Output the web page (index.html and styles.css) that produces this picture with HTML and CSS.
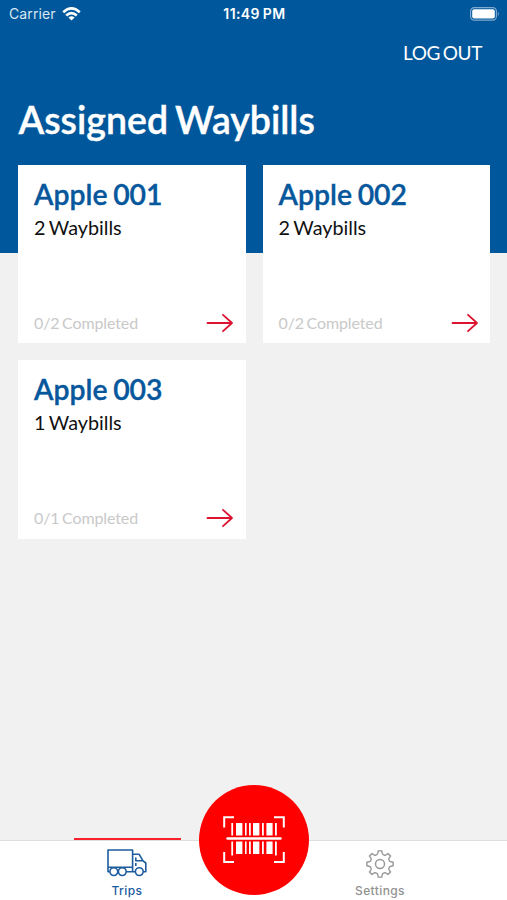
FILE: index.html
```
<!DOCTYPE html>
<html lang="en">
<head>
<meta charset="utf-8">
<title>Assigned Waybills</title>
<link rel="stylesheet" href="styles.css">
</head>
<body>
<svg class="defs" width="0" height="0" aria-hidden="true">
  <symbol id="arrow" viewBox="0 0 28 20"><path d="M1.5 10H26M17 1.8L26 10L17 18.2" fill="none" stroke="#dc1431" stroke-width="1.8" stroke-linecap="round" stroke-linejoin="round"/></symbol>
</svg>
<div class="app">
  <header class="header">
    <div class="status">
      <div class="carrier"><span>Carrier</span>
        <svg class="wifi" viewBox="0 0 19 14" width="19" height="14"><g fill="none" stroke="#fff" stroke-width="2.6"><path d="M1.2 5.3Q9.5-2.4 17.8 5.3"/><path d="M4.2 8.5Q9.5 3.6 14.8 8.5"/></g><path d="M6.4 10.5Q9.5 7.8 12.6 10.5L9.5 13.6Z" fill="#fff"/></svg>
      </div>
      <span class="time">11:49 PM</span>
      <svg class="battery" viewBox="0 0 30 14" width="30" height="14"><rect x=".6" y=".6" width="25.8" height="12.6" rx="3.6" fill="none" stroke="#7fa9cf" stroke-width="1.2"/><rect x="2.2" y="2.2" width="22.6" height="9.4" rx="2" fill="#fff"/><path d="M27.8 4.6Q29.8 6.9 27.8 9.2Z" fill="#7fa9cf"/></svg>
    </div>
    <a class="logout">LOG OUT</a>
    <h1>Assigned Waybills</h1>
  </header>
  <main class="grid">
    <article class="card"><h2>Apple 001</h2><p>2 Waybills</p><footer><span>0/2 Completed</span><svg width="28" height="20"><use href="#arrow"/></svg></footer></article>
    <article class="card"><h2>Apple 002</h2><p>2 Waybills</p><footer><span>0/2 Completed</span><svg width="28" height="20"><use href="#arrow"/></svg></footer></article>
    <article class="card"><h2>Apple 003</h2><p>1 Waybills</p><footer><span>0/1 Completed</span><svg width="28" height="20"><use href="#arrow"/></svg></footer></article>
  </main>
  <nav class="tabs">
    <a class="tab active">
      <svg width="40" height="28" viewBox="0 0 40 28" fill="none" stroke="#1c5c9f" stroke-width="1.6" stroke-linejoin="round"><path d="M2.8 22.7H1V1H25.6V22.7H19.2M10.6 22.7H11.4M25.6 5.3H32.2L36 11.8L38.8 14V22.7H36.4M28.2 22.7H25.6M1 18.3H25.6M36 11.8H28.8V8.6M28.8 14V17"/><circle cx="6.8" cy="22.6" r="3.9"/><circle cx="15.3" cy="22.6" r="3.9"/><circle cx="32.3" cy="22.6" r="3.9"/></svg>
      <span>Trips</span>
    </a>
    <a class="scan">
      <svg width="62" height="48" viewBox="0 0 62 48"><path d="M1.2 11.5V1.2H11M51 1.2H60.8V11.5M1.2 36V46H11M51 46H60.8V36" fill="none" stroke="#fff" stroke-width="2"/><path d="M4.5 22.5H57.5" stroke="#fff" stroke-width="2.4" stroke-linecap="round"/><path fill="#fff" d="M8.3 7h1.8v12.4H8.3zM13 7h6.4v12.4H13zM22 7h1.6v12.4H22zM26 7h1.8v12.4H26zM30 7h6.4v12.4H30zM39 7h1.8v12.4H39zM43.4 7h6.2v12.4h-6.2zM52 7h1.8v12.4H52zM8.3 25.5h1.8V39.5H8.3zM13 25.5h6.4v12.4H13zM22 25.5h1.6v12.4H22zM26 25.5h1.8v12.4H26zM30 25.5h6.4v12.4H30zM39 25.5h1.8v12.4H39zM43.4 25.5h6.2v12.4h-6.2zM52 25.5h1.8V39.5H52z"/></svg>
    </a>
    <a class="tab">
      <svg width="28" height="28" viewBox="-14 -14 28 28" fill="none" stroke="#979797" stroke-width="1.4" stroke-linejoin="round"><g id="quarter"><path id="cog" d="M-3.7-9Q-2.5-9.6-2.2-10.8L-1.8-13.1H1.8L2.2-10.8Q2.5-9.6 3.7-9"/><use href="#cog" transform="rotate(45)"/></g><use href="#quarter" transform="rotate(90)"/><use href="#quarter" transform="rotate(180)"/><use href="#quarter" transform="rotate(270)"/><circle r="4.5"/></svg>
      <span>Settings</span>
    </a>
  </nav>
</div>
</body>
</html>
```
FILE: styles.css
```
* { box-sizing: border-box; }
body { margin: 0; font-family: Lato, sans-serif; }
.defs { position: absolute; }
.app { width: 507px; height: 900px; display: flex; flex-direction: column; background: #f1f1f1; overflow: hidden; }
.header { height: 252.5px; flex: none; background: #00579b; color: #fff; display: flex; flex-direction: column; }
.status { height: 27px; padding: 0 7px 0 9px; display: grid; grid-template-columns: 1fr auto 1fr; align-items: center; font-family: Inter, sans-serif; }
.carrier { display: flex; align-items: center; gap: 6px; font-size: 14px; color: #d8e8f4; letter-spacing: 0.1px; }
.time { font-size: 14px; font-weight: 600; letter-spacing: 0.4px; word-spacing: -1px; }
.battery { justify-self: end; }
.logout { align-self: flex-end; margin: 14px 25px 0 0; font-size: 19px; line-height: 24px; letter-spacing: -0.4px; word-spacing: -1.6px; }
h1 { margin: 33px 0 0 18.5px; font-size: 37.5px; line-height: 44px; font-weight: 600; word-spacing: -2px; white-space: nowrap; -webkit-text-stroke: 0.4px currentColor; }
.grid { margin: -88px 17px 0 18px; display: grid; grid-template-columns: 227.5px 227.5px; grid-auto-rows: 178.5px; gap: 17px; flex: 1; align-content: start; }
.card { background: #fff; padding: 12px 11.5px 10.5px 16px; display: flex; flex-direction: column; }
h2 { margin: 0; font-size: 28.4px; line-height: 34px; font-weight: 600; word-spacing: -1.4px; color: #06579c; -webkit-text-stroke: 0.35px currentColor; }
.card p { margin: 4px 0 0; font-size: 19.8px; line-height: 24px; word-spacing: -1.5px; color: #111; }
.card footer { margin-top: auto; display: flex; justify-content: space-between; align-items: center; color: #c9c9c9; font-size: 16px; line-height: 20px; letter-spacing: -0.12px; word-spacing: -1.3px; }
.tabs { height: 60.5px; flex: none; background: #fff; border-top: 1px solid #dedede; display: grid; grid-template-columns: 107px 110px 107px; justify-content: center; column-gap: 18px; }
.tab { display: flex; flex-direction: column; align-items: center; padding-top: 9px; color: #929292; font: 500 12px/15px Inter, sans-serif; letter-spacing: 0.4px; }
.tab span { margin-top: 5.5px; }
.tab.active { color: #1c5c9f; border-top: 2.5px solid #f8212c; margin-top: -3px; }
.tab.active span { margin-top: 6.5px; }
.scan { width: 110px; height: 110px; margin-top: -56px; border-radius: 50%; background: #fe0000; display: flex; align-items: center; justify-content: center; }
```
